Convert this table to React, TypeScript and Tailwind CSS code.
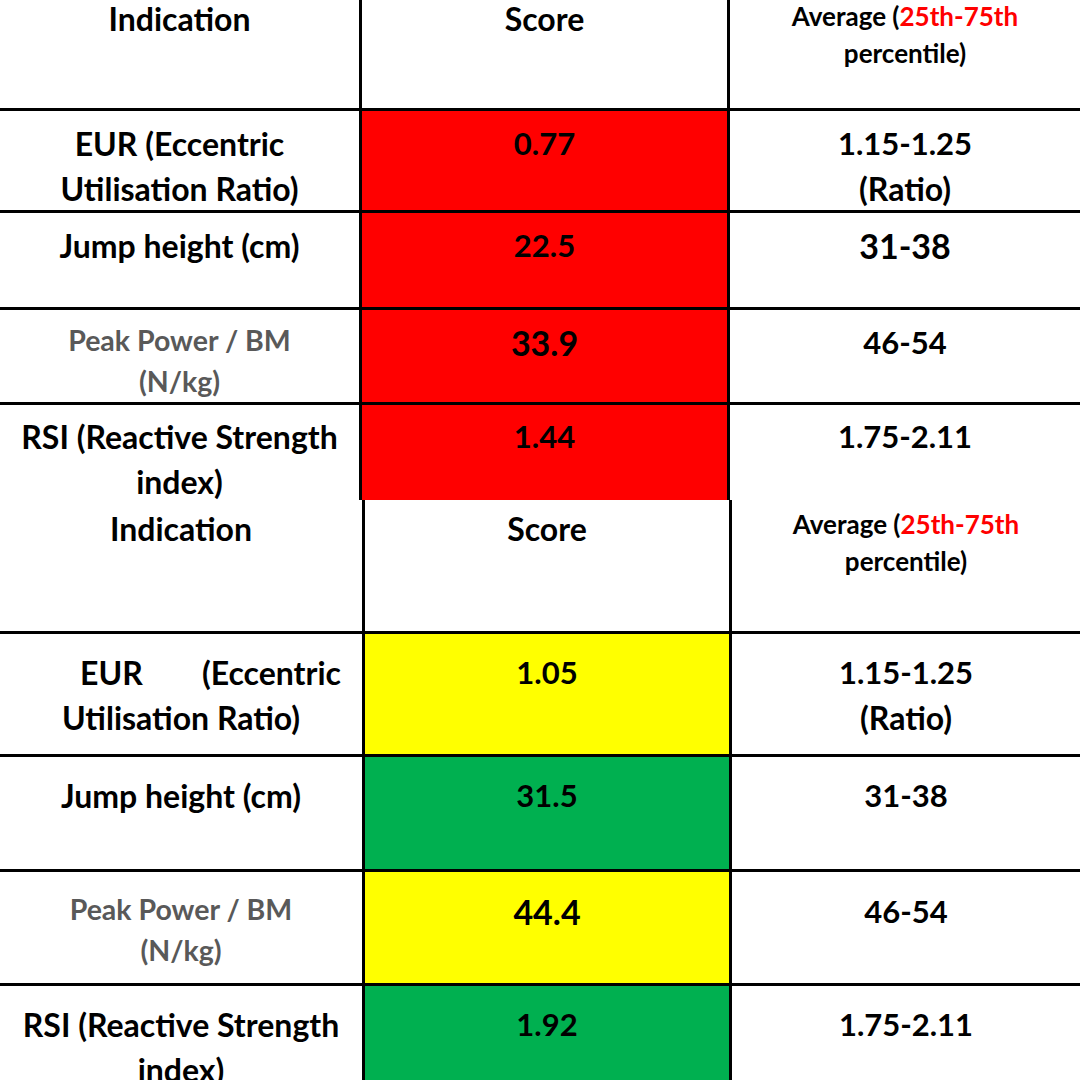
import React from "react";

const Red = ({ children }: { children: React.ReactNode }) => (
  <span className="text-[#ff0000]">{children}</span>
);

export default function App() {
  const main = "text-[32px] leading-[45px]";
  const num = "text-[31px] leading-[45px]";
  const big = "text-[34px] leading-[45px]";
  const gray = "text-[28.5px] leading-[41px] text-[#595959]";
  const avg = "text-[26px] leading-[37px]";
  const b = "border-b-[3px] border-black";
  const l = "border-l-[3px] border-black";

  return (
    <div className="w-[1080px] h-[1080px] overflow-hidden bg-white text-black font-['Lato',sans-serif] font-bold text-center">
      {/* Table 1 */}
      <div className="grid grid-cols-[359px_368px_1fr] grid-rows-[111px_102px_97px_95px_95px]">
        {/* header */}
        <div className={`${b}`}>
          <div className="text-[32px] leading-[38px]">Indication</div>
        </div>
        <div className={`${b} ${l}`}>
          <div className="text-[32px] leading-[38px]">Score</div>
        </div>
        <div className={`${b} ${l}`}>
          <div className="text-[26px]">
            <div className="leading-[32px]">
              Average (<Red>25th-75th</Red>
            </div>
            <div className="leading-[42px]">percentile)</div>
          </div>
        </div>

        {/* row 1 */}
        <div className={`${b} pt-[10px]`}>
          <div className={main}>
            EUR (Eccentric
            <br />
            Utilisation Ratio)
          </div>
        </div>
        <div className={`${b} ${l} bg-[#ff0000] pt-[10px]`}>
          <div className={num}>0.77</div>
        </div>
        <div className={`${b} ${l} pt-[10px]`}>
          <div className={num}>
            1.15-1.25
            <br />
            <span className="text-[32px]">(Ratio)</span>
          </div>
        </div>

        {/* row 2 */}
        <div className={`${b} pt-[10px]`}>
          <div className={main}>Jump height (cm)</div>
        </div>
        <div className={`${b} ${l} bg-[#ff0000] pt-[10px]`}>
          <div className={num}>22.5</div>
        </div>
        <div className={`${b} ${l} pt-[10px]`}>
          <div className={big}>31-38</div>
        </div>

        {/* row 3 */}
        <div className={`${b} pt-[10px]`}>
          <div className={gray}>
            Peak Power / BM
            <br />
            (N/kg)
          </div>
        </div>
        <div className={`${b} ${l} bg-[#ff0000] pt-[10px]`}>
          <div className={big}>33.9</div>
        </div>
        <div className={`${b} ${l} pt-[10px]`}>
          <div className={num}>46-54</div>
        </div>

        {/* row 4 */}
        <div className="pt-[9px]">
          <div className={main}>
            RSI (Reactive Strength
            <br />
            index)
          </div>
        </div>
        <div className={`${l} bg-[#ff0000] pt-[9px]`}>
          <div className={num}>1.44</div>
        </div>
        <div className={`${l} pt-[9px]`}>
          <div className={num}>1.75-2.11</div>
        </div>
      </div>

      {/* Table 2 */}
      <div className="grid grid-cols-[362px_367px_1fr] grid-rows-[134px_123px_115px_114px_130px]">
        {/* header */}
        <div className={`${b} pt-[6px]`}>
          <div className={main}>Indication</div>
        </div>
        <div className={`${b} ${l} pt-[6px]`}>
          <div className={main}>Score</div>
        </div>
        <div className={`${b} ${l} pt-[6px]`}>
          <div className={avg}>
            Average (<Red>25th-75th</Red>
            <br />
            percentile)
          </div>
        </div>

        {/* row 1 */}
        <div className={`${b} pt-[16px]`}>
          <div className={main}>
            <div className="ml-[80px] w-[261px] flex justify-between">
              <span>EUR</span>
              <span>(Eccentric</span>
            </div>
            <div>Utilisation Ratio)</div>
          </div>
        </div>
        <div className={`${b} ${l} bg-[#ffff00] pt-[16px]`}>
          <div className={num}>1.05</div>
        </div>
        <div className={`${b} ${l} pt-[16px]`}>
          <div className={num}>
            1.15-1.25
            <br />
            <span className="text-[32px]">(Ratio)</span>
          </div>
        </div>

        {/* row 2 */}
        <div className={`${b} pt-[16px]`}>
          <div className={main}>Jump height (cm)</div>
        </div>
        <div className={`${b} ${l} bg-[#00b050] pt-[16px]`}>
          <div className={num}>31.5</div>
        </div>
        <div className={`${b} ${l} pt-[16px]`}>
          <div className={num}>31-38</div>
        </div>

        {/* row 3 */}
        <div className={`${b} pt-[17px]`}>
          <div className={gray}>
            Peak Power / BM
            <br />
            (N/kg)
          </div>
        </div>
        <div className={`${b} ${l} bg-[#ffff00] pt-[17px]`}>
          <div className={big}>44.4</div>
        </div>
        <div className={`${b} ${l} pt-[17px]`}>
          <div className={num}>46-54</div>
        </div>

        {/* row 4 */}
        <div className="pt-[16px]">
          <div className={main}>
            RSI (Reactive Strength
            <br />
            index)
          </div>
        </div>
        <div className={`${l} bg-[#00b050] pt-[16px]`}>
          <div className={num}>1.92</div>
        </div>
        <div className={`${l} pt-[16px]`}>
          <div className={num}>1.75-2.11</div>
        </div>
      </div>
    </div>
  );
}
